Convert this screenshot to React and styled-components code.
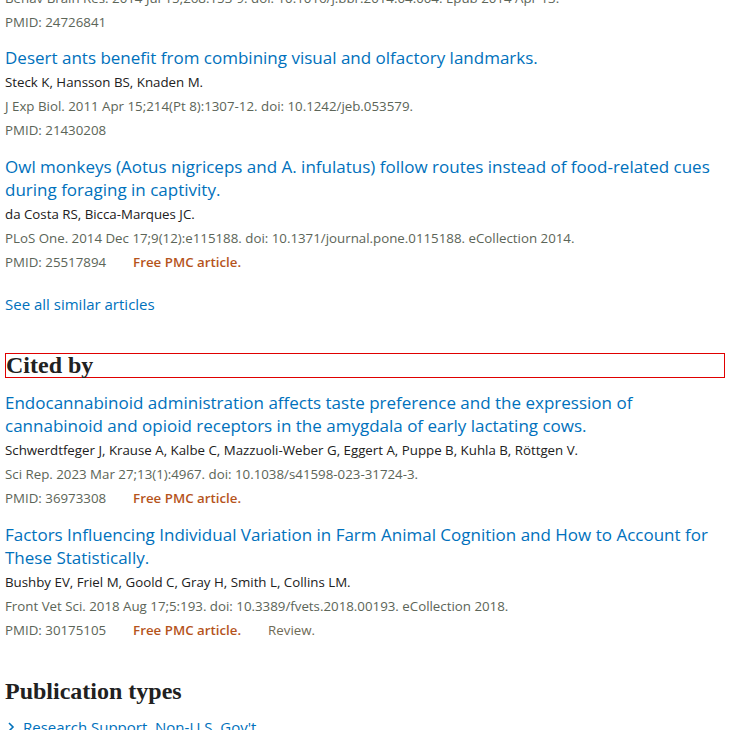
import React from 'react';
import styled, { createGlobalStyle } from 'styled-components';

const similar = [
  {
    title: 'Desert ants benefit from combining visual and olfactory landmarks.',
    authors: 'Steck K, Hansson BS, Knaden M.',
    citation: 'J Exp Biol. 2011 Apr 15;214(Pt 8):1307-12. doi: 10.1242/jeb.053579.',
    pmid: '21430208',
  },
  {
    title: 'Owl monkeys (Aotus nigriceps and A. infulatus) follow routes instead of food-related cues during foraging in captivity.',
    authors: 'da Costa RS, Bicca-Marques JC.',
    citation: 'PLoS One. 2014 Dec 17;9(12):e115188. doi: 10.1371/journal.pone.0115188. eCollection 2014.',
    pmid: '25517894',
    free: true,
  },
];

const citedBy = [
  {
    title: 'Endocannabinoid administration affects taste preference and the expression of cannabinoid and opioid receptors in the amygdala of early lactating cows.',
    authors: 'Schwerdtfeger J, Krause A, Kalbe C, Mazzuoli-Weber G, Eggert A, Puppe B, Kuhla B, Röttgen V.',
    citation: 'Sci Rep. 2023 Mar 27;13(1):4967. doi: 10.1038/s41598-023-31724-3.',
    pmid: '36973308',
    free: true,
  },
  {
    title: 'Factors Influencing Individual Variation in Farm Animal Cognition and How to Account for These Statistically.',
    authors: 'Bushby EV, Friel M, Goold C, Gray H, Smith L, Collins LM.',
    citation: 'Front Vet Sci. 2018 Aug 17;5:193. doi: 10.3389/fvets.2018.00193. eCollection 2018.',
    pmid: '30175105',
    free: true,
    review: true,
  },
];

const Article = ({ item }) => (
  <Docsum>
    <Title href="#">{item.title}</Title>
    <Authors>{item.authors}</Authors>
    <Citation>{item.citation}</Citation>
    <Meta>
      <span>PMID: {item.pmid}</span>
      {item.free && <Free>Free PMC article.</Free>}
      {item.review && <Review>Review.</Review>}
    </Meta>
  </Docsum>
);

const App = () => (
  <>
    <GlobalStyle />
    <Page>
      <Top>
        <Citation $cut>Behav Brain Res. 2014 Jul 15;268:153-9. doi: 10.1016/j.bbr.2014.04.004. Epub 2014 Apr 13.</Citation>
        <Meta>
          <span>PMID: 24726841</span>
        </Meta>
      </Top>
      {similar.map((a) => (
        <Article key={a.pmid} item={a} />
      ))}
      <SeeAll href="#">See all similar articles</SeeAll>

      <Heading $boxed>Cited by</Heading>
      {citedBy.map((a) => (
        <Article key={a.pmid} item={a} />
      ))}

      <Heading>Publication types</Heading>
      <TypeList>
        <TypeItem>
          <svg width="10" height="12" viewBox="0 0 10 12">
            <path d="M3 2 L7 6 L3 10" fill="none" stroke="#0071bc" strokeWidth="1.6" />
          </svg>
          <a href="#">Research Support, Non-U.S. Gov't</a>
        </TypeItem>
      </TypeList>
    </Page>
  </>
);

export default App;

const GlobalStyle = createGlobalStyle`
  html, body {
    margin: 0;
    background: #fff;
    overflow: hidden;
  }
  body {
    font-family: "Open Sans", "Noto Sans", sans-serif;
  }
`;

const Page = styled.div`
  width: 720px;
  padding: 0 5px;
  margin-top: -14px;
`;

const Top = styled.div`
  margin-bottom: 12px;
`;

const Docsum = styled.article`
  margin-bottom: 13px;
`;

const Title = styled.a`
  display: block;
  color: #0071bc;
  text-decoration: none;
  font-size: 17px;
  line-height: 23.5px;
`;

const Authors = styled.div`
  color: #212121;
  font-size: 13.3px;
  line-height: 24px;
`;

const Citation = styled.div`
  color: #5c6558;
  font-size: 13.3px;
  line-height: 24px;
  white-space: ${(p) => (p.$cut ? 'nowrap' : 'normal')};
`;

const Meta = styled.div`
  display: flex;
  gap: 27px;
  color: #5c6558;
  font-size: 13.3px;
  line-height: 24px;
`;

const Free = styled.span`
  color: #b5541c;
  font-weight: 600;
`;

const Review = styled.span`
  color: #6f6a55;
`;

const SeeAll = styled.a`
  display: block;
  margin-top: 18px;
  color: #0071bc;
  text-decoration: none;
  font-size: 15px;
  line-height: 24px;
`;

const Heading = styled.h2`
  margin: ${(p) => (p.$boxed ? '37px 0 13px' : '38px 0 12px')};
  font-family: "Liberation Serif", "Times New Roman", serif;
  font-weight: 700;
  font-size: 24px;
  line-height: 23px;
  color: #212121;
  border: ${(p) => (p.$boxed ? '1px solid #e00000' : 'none')};
  padding: 0;
`;

const TypeList = styled.ul`
  list-style: none;
  margin: 0;
  padding: 0;
`;

const TypeItem = styled.li`
  display: flex;
  align-items: center;
  gap: 7px;
  padding-left: 1px;
  font-size: 15px;
  line-height: 24px;

  a {
    color: #0071bc;
    text-decoration: none;
  }
`;
